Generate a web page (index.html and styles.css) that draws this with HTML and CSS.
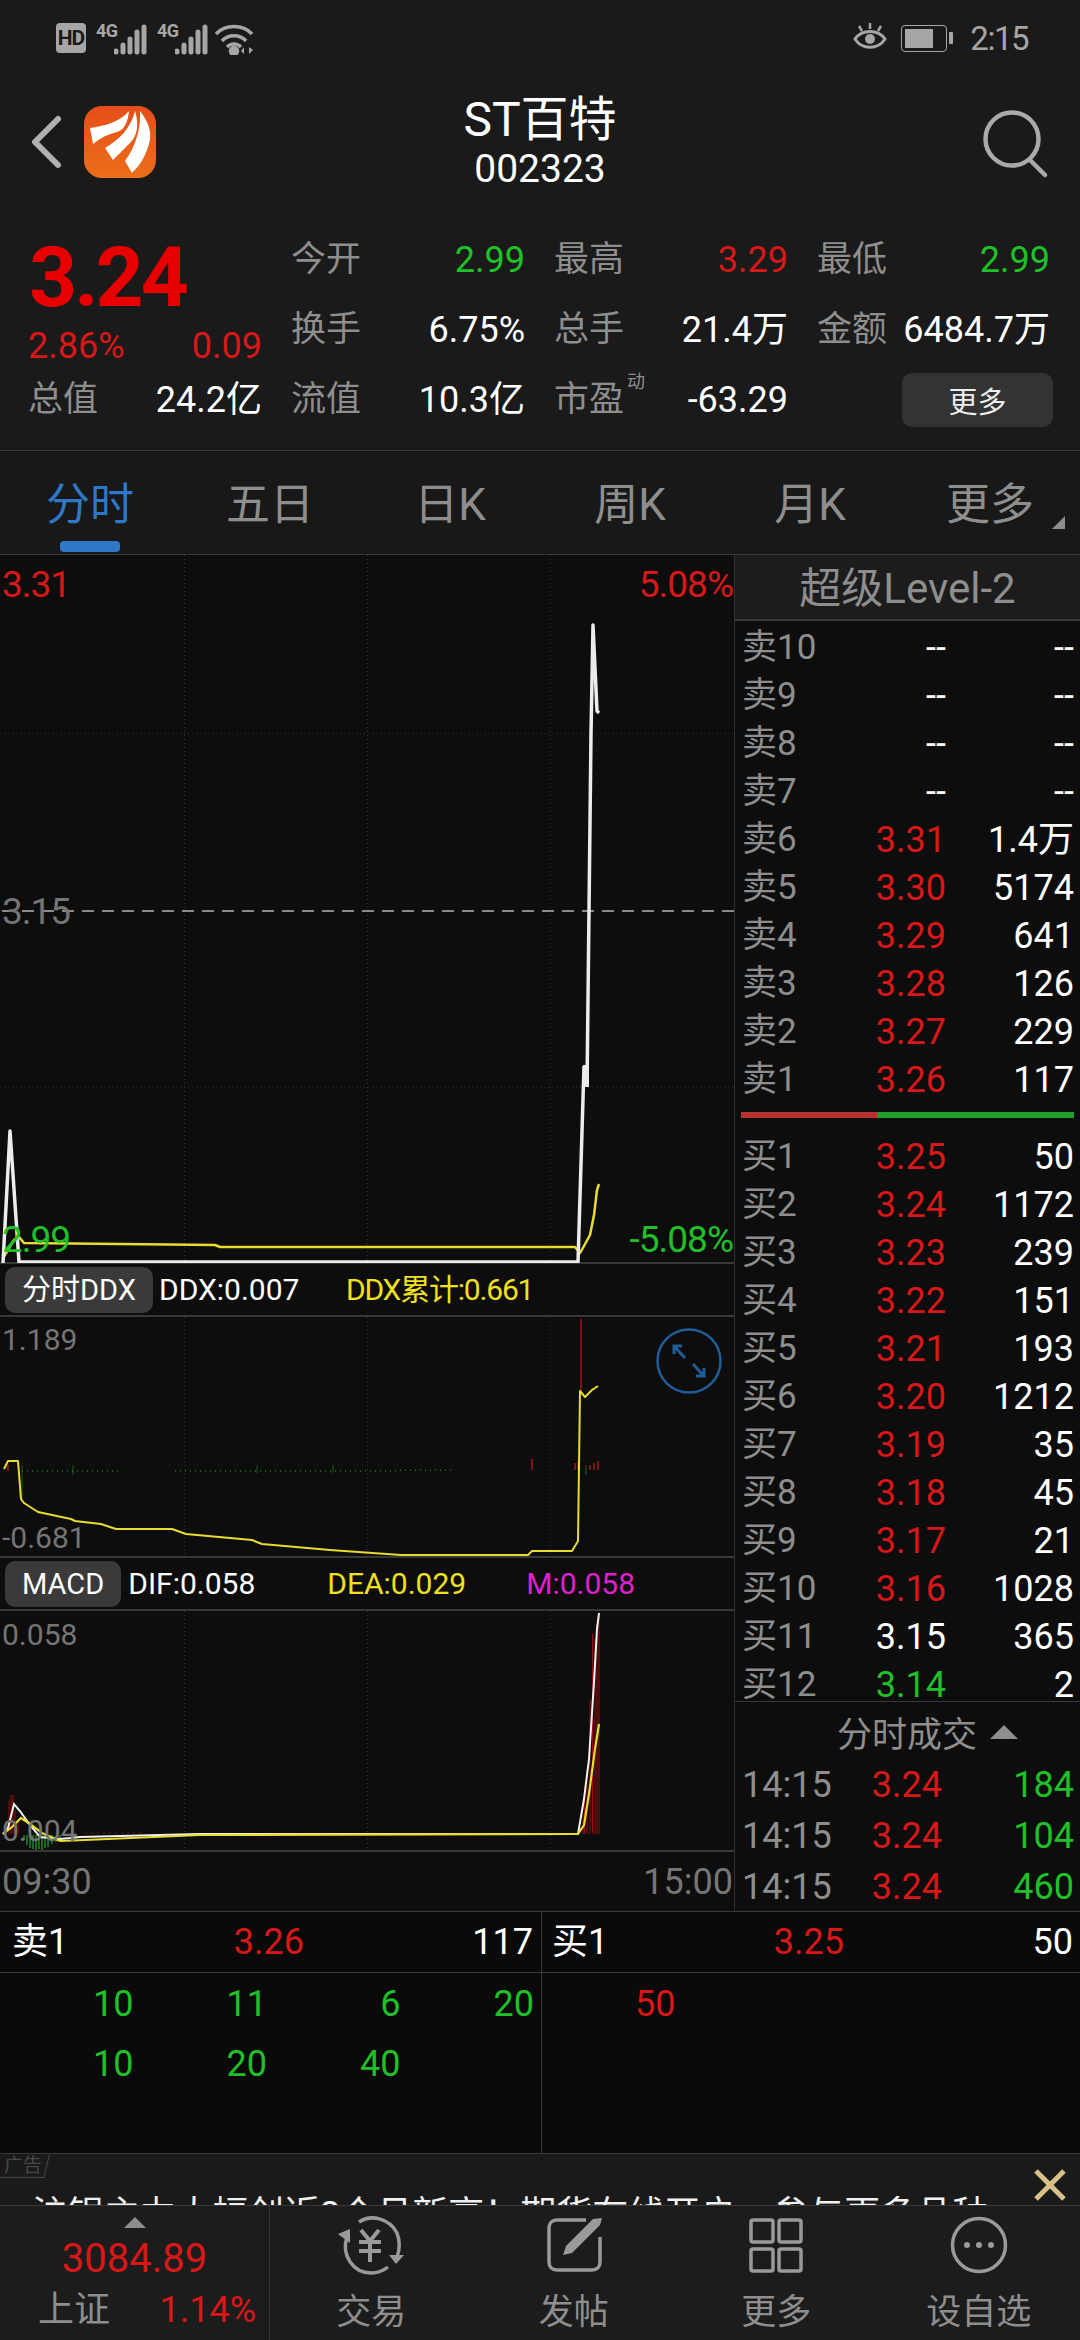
FILE: index.html
```html
<!DOCTYPE html>
<html lang="zh-CN">
<head>
    <meta charset="UTF-8">
    <meta name="viewport" content="width=device-width, initial-scale=1.0">
    <title>ST百特 002323</title>
    <link rel="stylesheet" href="styles.css">
</head>
<body>
    <div class="phone">
        <!-- system status bar -->
        <div class="status">
            <div class="status-left">
                <span class="hd">HD</span>
                <span class="net">4G</span>
                <svg class="signal" width="36" height="32" viewBox="0 0 36 32"><path d="M2 28v1M9 22v7M16 16v13M23 9v20M30 4v25"/></svg>
                <span class="net net-second">4G</span>
                <svg class="signal" width="36" height="32" viewBox="0 0 36 32"><path d="M2 28v1M9 22v7M16 16v13M23 9v20M30 4v25"/></svg>
                <svg class="wifi" width="40" height="32" viewBox="0 0 40 32">
                    <path d="M1 11C10 1 28 1 37 11M7 18C13 11 25 11 31 18M12 24C16 20 22 20 26 24" fill="none"/>
                    <circle cx="19" cy="28" r="3.5"/>
                    <path class="wifi-arrows" d="M29 24v7l-3-3zM34 24v7l4-4z"/>
                </svg>
            </div>
            <div class="status-right">
                <svg width="34" height="32" viewBox="0 0 34 32" fill="none" stroke="#a6a6a6" stroke-width="3">
                    <path d="M2 17C9 7 25 7 32 17C25 28 9 28 2 17Z"/>
                    <circle cx="17" cy="17" r="5" fill="#a6a6a6" stroke="none"/>
                    <path d="M17 1v6M6 4l3 5M28 4l-3 5" stroke-width="2.5"/>
                </svg>
                <div class="battery"><span class="battery-fill"></span></div>
                <span class="clock">2:15</span>
            </div>
        </div>

        <!-- stock title bar -->
        <header class="titlebar">
            <div class="title-left">
                <svg width="32" height="54" viewBox="0 0 32 54" fill="none" stroke="#b0b0b0" stroke-width="6" stroke-linecap="round" stroke-linejoin="round"><path d="M28 4L5 27L28 50"/></svg>
                <div class="logo">
                    <svg width="72" height="72" viewBox="0 0 72 72" fill="#fff">
                        <path d="M6 22C20 20 36 16 45 5C44 16 40 24 33 26C24 28 16 32 9 38Z"/>
                        <path d="M21 42C35 34 47 22 51 5C55 18 54 30 45 38C38 45 33 50 29 54Z"/>
                        <path d="M41 55C52 40 57 22 56 5C66 18 68 28 65 38C61 52 55 60 48 67Z"/>
                    </svg>
                </div>
            </div>
            <div class="title-main">
                <div class="stock-name">ST百特</div>
                <div class="stock-code">002323</div>
            </div>
            <div class="title-right">
                <svg width="68" height="72" viewBox="0 0 68 72" fill="none" stroke="#aaa" stroke-width="4.5" stroke-linecap="round"><circle cx="30" cy="32" r="26.5"/><path d="M48 53L63 68"/></svg>
            </div>
        </header>

        <!-- quote summary -->
        <section class="quote">
            <div class="quote-main">
                <div class="price">3.24</div>
                <div class="change"><span>2.86%</span><span>0.09</span></div>
                <div class="stat"><span class="key">总值</span><span>24.2亿</span></div>
            </div>
            <div class="quote-grid">
                <div class="stat"><span class="key">今开</span><span class="down">2.99</span></div>
                <div class="stat"><span class="key">最高</span><span class="up">3.29</span></div>
                <div class="stat"><span class="key">最低</span><span class="down">2.99</span></div>
                <div class="stat"><span class="key">换手</span><span>6.75%</span></div>
                <div class="stat"><span class="key">总手</span><span>21.4万</span></div>
                <div class="stat"><span class="key">金额</span><span>6484.7万</span></div>
                <div class="stat"><span class="key">流值</span><span>10.3亿</span></div>
                <div class="stat"><span class="key key-pe">市盈<sup class="pe-mark">动</sup></span><span>-63.29</span></div>
                <div class="more-cell"><button class="more-btn">更多</button></div>
            </div>
        </section>

        <!-- period tabs -->
        <nav class="tabs">
            <a class="tab active">分时</a>
            <a class="tab">五日</a>
            <a class="tab">日K</a>
            <a class="tab">周K</a>
            <a class="tab">月K</a>
            <a class="tab">更多</a>
            <span class="tab-corner"></span>
        </nav>

        <div class="market">
            <div class="charts">
                <!-- intraday price -->
                <div class="pane pane-main">
                    <svg viewBox="0 555 734 708" width="734" height="708">
                        <path class="grid-line" d="M184.500 555V1263M367.500 555V1263M550.500 555V1263M0 734H734M0 1087H734"/>
                        <path class="mid-line" d="M2 911H734"/>
                        <path class="avg" d="M3 1258L14 1240L19 1237L24 1243L215 1245L220 1247L575 1247L580 1253L584 1246L590 1235L594 1215L597 1190L599 1184"/>
                        <path class="price-line" d="M3 1263L10 1131L19 1262H578L584 1066"/>
                        <path class="price-line thick" d="M586 1065V1087"/>
                        <path class="price-line" d="M587 1087L589 911L591 734L593 625L597 711L599 713"/>
                    </svg>
                    <span class="axis up at-tl">3.31</span>
                    <span class="axis up at-tr">5.08%</span>
                    <span class="axis grey at-mid">3.15</span>
                    <span class="axis down at-bl">2.99</span>
                    <span class="axis down at-br">-5.08%</span>
                </div>

                <div class="legend">
                    <span class="pill">分时DDX</span>
                    <span class="legend-a">DDX:0.007</span>
                    <span class="legend-b yellow">DDX累计:0.661</span>
                </div>

                <!-- DDX -->
                <div class="pane pane-ddx">
                    <svg viewBox="0 1318 734 240" width="734" height="240">
                        <path class="grid-line" d="M184.500 1318V1558M367.500 1318V1558M550.500 1318V1558"/>
                        <path class="tick-green" d="M22 1472H120M175 1472H400M400 1471H455"/>
                        <path class="tick-green solid" d="M22 1466V1503M73 1466V1476M257 1466V1474M333 1466V1474M586 1466V1476"/>
                        <path class="tick-red" d="M8 1466V1472M532 1460V1471M575 1464V1471M578 1462V1471M590 1466V1471M594 1464V1471M598 1462V1471"/>
                        <path class="tick-red strong" d="M581 1320V1395"/>
                        <path class="avg thin" d="M4 1470L8 1462H18L21 1500L24 1504L38 1513L71 1520L75 1522L101 1525L116 1530H172L186 1535L252 1541L262 1545L330 1551L401 1556H528L532 1552H572L578 1542L580 1392L585 1398L592 1391L598 1387"/>
                    </svg>
                    <span class="axis small grey at-tl">1.189</span>
                    <span class="axis small grey at-bl">-0.681</span>
                    <svg class="expand" width="68" height="68" viewBox="0 0 68 68" fill="none" stroke="#1f5c98" stroke-width="2.500">
                        <circle cx="34" cy="34" r="31.500"/>
                        <path d="M19 19L30 31M19 27V19H27M49 49L38 37M49 41V49H41" stroke-width="3"/>
                    </svg>
                </div>

                <div class="legend">
                    <span class="pill">MACD</span>
                    <span class="legend-c">DIF:0.058</span>
                    <span class="legend-d yellow">DEA:0.029</span>
                    <span class="legend-e magenta">M:0.058</span>
                </div>

                <!-- MACD -->
                <div class="pane pane-macd">
                    <svg viewBox="0 1612 734 240" width="734" height="240">
                        <path class="grid-line" d="M184.500 1612V1852M367.500 1612V1852M550.500 1612V1852"/>
                        <path class="bar-red" d="M9 1835V1802M11 1835V1796M13 1835V1796M15 1835V1810M18 1835V1822M583 1835V1815M584.500 1835V1787M587 1835V1770M590 1835V1700M592.500 1835V1635M595 1835V1640M597 1835V1625M599 1835V1614"/>
                        <path class="bar-green" d="M24 1836V1841M27 1836V1846M30 1836V1849M33 1836V1850M36 1836V1851M39 1836V1850M42 1836V1851M45 1836V1849M48 1836V1848M52 1836V1845M56 1836V1843M60 1836V1840"/>
                        <path class="tick-red faint" d="M85 1834H145"/>
                        <path class="macd-dif" d="M3 1835L8 1829L14 1805L20 1812L30 1826L40 1838L60 1840L80 1838L200 1835H578L584 1800L589 1760L594 1683L597 1630L599 1614"/>
                        <path class="macd-dea" d="M3 1835L12 1828L21 1819L30 1825L42 1834L60 1842L85 1841L200 1836L578 1835L584 1826L589 1795L595 1750L599 1725"/>
                    </svg>
                    <span class="axis small grey at-tl">0.058</span>
                    <span class="axis small grey at-low">0.004</span>
                </div>

                <div class="time-axis"><span>09:30</span><span>15:00</span></div>
            </div>

            <!-- order book -->
            <aside class="book">
                <div class="book-head">超级Level-2</div>
                <div class="book-list book-sell">
                    <div class="row"><span class="lbl">卖10</span><span class="white">--</span><span class="white">--</span></div>
                    <div class="row"><span class="lbl">卖9</span><span class="white">--</span><span class="white">--</span></div>
                    <div class="row"><span class="lbl">卖8</span><span class="white">--</span><span class="white">--</span></div>
                    <div class="row"><span class="lbl">卖7</span><span class="white">--</span><span class="white">--</span></div>
                    <div class="row"><span class="lbl">卖6</span><span class="up">3.31</span><span class="white">1.4万</span></div>
                    <div class="row"><span class="lbl">卖5</span><span class="up">3.30</span><span class="white">5174</span></div>
                    <div class="row"><span class="lbl">卖4</span><span class="up">3.29</span><span class="white">641</span></div>
                    <div class="row"><span class="lbl">卖3</span><span class="up">3.28</span><span class="white">126</span></div>
                    <div class="row"><span class="lbl">卖2</span><span class="up">3.27</span><span class="white">229</span></div>
                    <div class="row"><span class="lbl">卖1</span><span class="up">3.26</span><span class="white">117</span></div>
                </div>
                <div class="ratio"><span class="ratio-sell"></span><span class="ratio-buy"></span></div>
                <div class="book-list book-buy">
                    <div class="row"><span class="lbl">买1</span><span class="up">3.25</span><span class="white">50</span></div>
                    <div class="row"><span class="lbl">买2</span><span class="up">3.24</span><span class="white">1172</span></div>
                    <div class="row"><span class="lbl">买3</span><span class="up">3.23</span><span class="white">239</span></div>
                    <div class="row"><span class="lbl">买4</span><span class="up">3.22</span><span class="white">151</span></div>
                    <div class="row"><span class="lbl">买5</span><span class="up">3.21</span><span class="white">193</span></div>
                    <div class="row"><span class="lbl">买6</span><span class="up">3.20</span><span class="white">1212</span></div>
                    <div class="row"><span class="lbl">买7</span><span class="up">3.19</span><span class="white">35</span></div>
                    <div class="row"><span class="lbl">买8</span><span class="up">3.18</span><span class="white">45</span></div>
                    <div class="row"><span class="lbl">买9</span><span class="up">3.17</span><span class="white">21</span></div>
                    <div class="row"><span class="lbl">买10</span><span class="up">3.16</span><span class="white">1028</span></div>
                    <div class="row"><span class="lbl">买11</span><span class="white">3.15</span><span class="white">365</span></div>
                    <div class="row"><span class="lbl">买12</span><span class="down">3.14</span><span class="white">2</span></div>
                </div>
                <div class="trades-head">分时成交<span class="caret"></span></div>
                <div class="trade"><span class="lbl">14:15</span><span class="up">3.24</span><span class="down">184</span></div>
                <div class="trade"><span class="lbl">14:15</span><span class="up">3.24</span><span class="down">104</span></div>
                <div class="trade"><span class="lbl">14:15</span><span class="up">3.24</span><span class="down">460</span></div>
            </aside>
        </div>

        <!-- best bid / ask queue -->
        <section class="queue">
            <div class="queue-side queue-sell">
                <div class="queue-head"><span class="white">卖1</span><span class="up">3.26</span><span class="white">117</span></div>
                <div class="queue-cells down">
                    <span>10</span><span>11</span><span>6</span><span>20</span>
                    <span>10</span><span>20</span><span>40</span>
                </div>
            </div>
            <div class="queue-side queue-buy">
                <div class="queue-head"><span class="white">买1</span><span class="up">3.25</span><span class="white">50</span></div>
                <div class="queue-cells up"><span>50</span></div>
            </div>
        </section>

        <!-- ad strip -->
        <div class="ad">
            <span class="ad-tag">广告</span>
            <div class="ad-line"><span>沪银主力大幅创近2个月新高！期货在线开户，参与更多品种</span><span class="ad-go">&gt;</span></div>
            <svg class="ad-close" width="32" height="32" viewBox="0 0 32 32"><path d="M2 2L30 30M30 2L2 30" stroke="#d8c088" stroke-width="5" fill="none"/></svg>
        </div>

        <!-- bottom dock -->
        <footer class="dock">
            <div class="index">
                <span class="index-caret"></span>
                <div class="index-value">3084.89</div>
                <div class="index-row"><span class="key">上证</span><span class="up">1.14%</span></div>
            </div>
            <a class="dock-item">
                <svg width="68" height="64" viewBox="0 0 68 64" fill="none" stroke="#9a9a9a" stroke-width="3.500">
                    <path d="M10 24C4 42 16 60 34 60C40 60 46 58 51 54M22 9C34 1 52 5 60 20C63 28 63 36 60 44"/>
                    <path d="M1 21L13 16L13 30Z" fill="#9a9a9a" stroke="none"/>
                    <path d="M67 42L59 51L52 42Z" fill="#9a9a9a" stroke="none"/>
                    <path d="M24 17L33 28L42 17M22 29H44M22 38H44M33 28V49" stroke-width="4"/>
                </svg>
                <span>交易</span>
            </a>
            <a class="dock-item">
                <svg width="64" height="64" viewBox="0 0 64 64" fill="none" stroke="#9a9a9a" stroke-width="3.500">
                    <path d="M44 7H15C10 7 7 10 7 15V49C7 54 10 57 15 57H50C55 57 58 54 58 49V24"/>
                    <path d="M21 42L24 33L51 6L60 5L58 12L30 40Z" fill="#9a9a9a" stroke="none"/>
                </svg>
                <span>发帖</span>
            </a>
            <a class="dock-item">
                <svg width="64" height="64" viewBox="0 0 64 64" fill="none" stroke="#9a9a9a" stroke-width="3.500">
                    <rect x="7" y="7" width="22" height="22" rx="2"/><rect x="35" y="7" width="22" height="22" rx="2"/>
                    <rect x="7" y="36" width="22" height="22" rx="2"/><rect x="35" y="36" width="22" height="22" rx="2"/>
                </svg>
                <span>更多</span>
            </a>
            <a class="dock-item">
                <svg width="64" height="64" viewBox="0 0 64 64" fill="none" stroke="#9a9a9a" stroke-width="3.500">
                    <circle cx="32" cy="32" r="26.500"/>
                    <g fill="#9a9a9a" stroke="none"><circle cx="20" cy="32" r="3"/><circle cx="32" cy="32" r="3"/><circle cx="44" cy="32" r="3"/></g>
                </svg>
                <span>设自选</span>
            </a>
        </footer>
    </div>
</body>
</html>
```

FILE: styles.css
```css
* {
    box-sizing: border-box;
}

body {
    margin: 0;
    background: #1a1a1a;
    font-family: Roboto, "Noto Sans CJK SC", sans-serif;
    color: #fff;
}

.phone {
    width: 1080px;
    height: 2340px;
    overflow: hidden;
    background: #1a1a1a;
}

.up { color: #d81818; }
.down { color: #1fc028; }
.white { color: #fff; }
.yellow { color: #f0e020; }
.magenta { color: #e020d0; }
.grey { color: #757575; }
.key { color: #8e8e8e; }

/* status bar */
.status {
    display: flex;
    justify-content: space-between;
    align-items: center;
    height: 76px;
    padding: 0 52px 0 56px;
    color: #a6a6a6;
}

.status-left,
.status-right {
    display: flex;
    align-items: center;
}

.hd {
    width: 30px;
    height: 30px;
    border-radius: 4px;
    background: #a6a6a6;
    color: #1a1a1a;
    font-size: 21px;
    font-weight: 700;
    line-height: 30px;
    text-align: center;
    letter-spacing: -1px;
}

.net {
    align-self: flex-start;
    width: 18px;
    margin-left: 10px;
    font-size: 18px;
    font-weight: 700;
    line-height: 20px;
    letter-spacing: -0.5px;
}

.net-second {
    margin-left: 7px;
}

.signal {
    margin-top: 2px;
    fill: none;
    stroke: #a6a6a6;
    stroke-width: 5;
    stroke-linecap: round;
}

.wifi {
    margin: 2px 0 0 4px;
    stroke: #a6a6a6;
    stroke-width: 3.5;
    fill: #a6a6a6;
}

.wifi-arrows {
    stroke: none;
}

.battery {
    position: relative;
    width: 46px;
    height: 27px;
    margin: 0 23px 0 14px;
    padding: 3px;
    border: 1.5px solid #a6a6a6;
    border-radius: 4px;
}

.battery::after {
    content: "";
    position: absolute;
    right: -7px;
    top: 6px;
    width: 4px;
    height: 12px;
    background: #a6a6a6;
    border-radius: 1px;
}

.battery-fill {
    display: block;
    width: 28px;
    height: 100%;
    background: #a6a6a6;
}

.clock {
    font-size: 33px;
    letter-spacing: -1.5px;
}

/* title bar */
.titlebar {
    display: grid;
    grid-template-columns: 1fr auto 1fr;
    height: 144px;
}

.title-left {
    display: flex;
    align-items: center;
    gap: 22px;
    padding: 0 0 0 30px;
    height: 132px;
}

.logo {
    width: 72px;
    height: 72px;
    border-radius: 18px;
    background: linear-gradient(180deg, #e64e1a, #ec6e1a);
}

.logo svg {
    display: block;
}

.title-main {
    text-align: center;
    padding-top: 19px;
}

.stock-name {
    font-size: 48px;
    line-height: 50px;
}

.stock-code {
    font-size: 39px;
    line-height: 48px;
}

.title-right {
    display: flex;
    justify-content: flex-end;
    align-items: center;
    height: 134px;
    padding-right: 30px;
}

/* quote */
.quote {
    display: flex;
    height: 231px;
    padding-left: 28px;
    border-bottom: 1px solid #3a3a3a;
}

.quote-main {
    width: 234px;
    margin-right: 29px;
    font-size: 36px;
}

.price {
    height: 108px;
    padding: 8px 0 0 1px;
    font-size: 84px;
    font-weight: 700;
    line-height: 100px;
    letter-spacing: -3px;
    color: #e80000;
}

.change {
    display: flex;
    justify-content: space-between;
    height: 36px;
    line-height: 36px;
    color: #d81818;
}

.quote-main .stat {
    height: 72px;
}

.quote-grid {
    display: grid;
    grid-template-columns: 234px 234px 233px;
    grid-auto-rows: 70px;
    column-gap: 29px;
    padding-top: 5px;
    font-size: 36px;
}

.stat {
    display: flex;
    justify-content: space-between;
    align-items: center;
    line-height: 40px;
}

.stat .key {
    font-size: 35px;
}

.key-pe {
    position: relative;
}

.pe-mark {
    position: absolute;
    left: 73px;
    top: -8px;
    font-size: 18px;
    line-height: 20px;
}

.more-cell {
    display: flex;
    justify-content: flex-end;
    align-items: center;
}

.more-btn {
    width: 151px;
    height: 54px;
    margin-right: -3px;
    border: none;
    border-radius: 10px;
    background: #333;
    color: #eee;
    font-family: inherit;
    font-size: 29px;
}

/* tabs */
.tabs {
    position: relative;
    display: grid;
    grid-template-columns: repeat(6, 180px);
    height: 104px;
    border-bottom: 1px solid #3a3a3a;
    background: #181818;
}

.tab {
    position: relative;
    font-size: 44px;
    line-height: 109px;
    text-align: center;
    color: #8e8e8e;
}

.tab.active {
    color: #2f78c8;
}

.tab.active::after {
    content: "";
    position: absolute;
    left: 60px;
    bottom: 8px;
    width: 60px;
    height: 11px;
    border-radius: 4px;
    background: #2f78c8;
}

.tab-corner {
    position: absolute;
    right: 15px;
    top: 65px;
    border-style: solid;
    border-width: 0 0 13px 13px;
    border-color: transparent transparent #8e8e8e transparent;
}

/* chart column */
.market {
    display: flex;
    height: 1357px;
    border-bottom: 1px solid #3a3a3a;
    background: #0d0d0d;
}

.charts {
    width: 735px;
    border-right: 1px solid #303030;
}

.pane {
    position: relative;
    border-bottom: 2px solid #383838;
}

.pane > svg:first-child {
    display: block;
}

.pane-main {
    height: 709px;
}

.pane-ddx,
.pane-macd {
    height: 241px;
}

.grid-line {
    fill: none;
    stroke: #333;
    stroke-width: 1;
    stroke-dasharray: 1 3;
}

.mid-line {
    fill: none;
    stroke: #8a8a8a;
    stroke-width: 2;
    stroke-dasharray: 12 8;
}

.price-line {
    fill: none;
    stroke: #ececec;
    stroke-width: 3.5;
    stroke-linejoin: round;
}

.price-line.thick {
    stroke-width: 6;
}

.avg {
    fill: none;
    stroke: #e8dc30;
    stroke-width: 2.5;
    stroke-linejoin: round;
}

.avg.thin {
    stroke-width: 2;
}

.tick-green {
    fill: none;
    stroke: #1a5a1a;
    stroke-width: 2;
    stroke-dasharray: 1 4;
}

.tick-green.solid {
    stroke-width: 1;
    stroke-dasharray: none;
}

.tick-red {
    fill: none;
    stroke: #a01818;
    stroke-width: 1.5;
}

.tick-red.strong {
    stroke: #b01010;
}

.tick-red.faint {
    stroke: #5a1010;
    stroke-dasharray: 2 4;
}

.bar-red {
    fill: none;
    stroke: #960e0e;
    stroke-width: 1;
}

.bar-green {
    fill: none;
    stroke: #1fa82a;
    stroke-width: 1.2;
}

.macd-dif {
    fill: none;
    stroke: #f2f2f2;
    stroke-width: 2;
}

.macd-dea {
    fill: none;
    stroke: #e8dc30;
    stroke-width: 2.2;
}

/* price and percent labels laid over the charts */
.axis {
    position: absolute;
    font-size: 37px;
    line-height: 40px;
    letter-spacing: -1px;
}

.axis.small {
    font-size: 30px;
    line-height: 36px;
    letter-spacing: 0;
}

.at-tl { left: 2px; top: 10px; }
.at-tr { right: 1px; top: 10px; }
.at-mid { left: 2px; top: 337px; }
.at-bl { left: 2px; top: 665px; }
.at-br { right: 1px; top: 665px; }

.pane-ddx .at-tl { top: 5px; }
.pane-ddx .at-bl { top: 203px; }
.pane-macd .at-tl { top: 6px; }
.pane-macd .at-low { left: 2px; top: 202px; }

.expand {
    position: absolute;
    left: 655px;
    top: 10px;
}

.legend {
    display: flex;
    align-items: center;
    height: 53px;
    padding-left: 5px;
    font-size: 30px;
    line-height: 40px;
    border-bottom: 2px solid #383838;
}

.pill {
    height: 46px;
    padding: 0 17px;
    border-radius: 10px;
    background: #3a3a3a;
    font-size: 29px;
    line-height: 46px;
}

.legend-a { margin-left: 6px; width: 187px; }
.legend-b { white-space: nowrap; letter-spacing: -1.2px; }
.legend-c { margin-left: 7px; width: 199px; }
.legend-d { width: 199px; }
.legend-e { white-space: nowrap; }

.time-axis {
    display: flex;
    justify-content: space-between;
    padding: 0 1px 0 2px;
    font-size: 36px;
    line-height: 60px;
    color: #757575;
}

/* order book */
.book {
    width: 345px;
    font-size: 36px;
    color: #8e8e8e;
}

.book-head {
    height: 66px;
    border-bottom: 2px solid #383838;
    background: #1c1c1c;
    font-size: 42px;
    line-height: 68px;
    text-align: center;
}

.book-sell {
    padding-top: 3px;
}

.row,
.trade {
    display: grid;
    grid-template-columns: 90px 114px 128px;
    height: 48px;
    padding-left: 7px;
    line-height: 48px;
    text-align: right;
}

.trade {
    grid-template-columns: 90px 110px 132px;
    height: 51px;
    line-height: 53px;
}

.lbl {
    text-align: left;
    white-space: nowrap;
}

.row .lbl {
    font-size: 35px;
}

.ratio {
    display: flex;
    height: 6px;
    margin: 8px 6px 15px;
}

.ratio-sell {
    width: 136px;
    background: #b83232;
}

.ratio-buy {
    flex: 1;
    background: #1f9e2c;
}

/* the twelfth row runs right down to the rule under the list */
.book-buy {
    height: 569px;
    border-bottom: 1px solid #383838;
}

.trades-head {
    display: flex;
    justify-content: center;
    align-items: center;
    height: 57px;
    padding: 2px 0 0 40px;
    font-size: 35px;
}

.caret {
    margin-left: 13px;
    border-style: solid;
    border-width: 0 14px 14px;
    border-color: transparent transparent #8e8e8e;
}

/* bid / ask queue */
.queue {
    display: flex;
    height: 241px;
    background: #0a0a0a;
    font-size: 36px;
}

.queue-sell {
    width: 541px;
}

.queue-buy {
    width: 539px;
    border-left: 1px solid #3a3a3a;
}

.queue-head {
    display: grid;
    grid-template-columns: 160px 132px 1fr;
    height: 61px;
    padding: 0 8px 0 12px;
    line-height: 60px;
    border-bottom: 1px solid #3a3a3a;
    text-align: right;
}

.queue-head span:first-child {
    text-align: left;
}

.queue-buy .queue-head {
    padding: 0 7px 0 10px;
}

.queue-cells {
    display: grid;
    grid-template-columns: repeat(4, 133.5px);
    grid-auto-rows: 60px;
    padding-top: 1px;
    line-height: 60px;
    text-align: right;
}

/* ad strip */
.ad {
    position: relative;
    height: 52px;
    overflow: hidden;
    border-top: 1px solid #3a3a3a;
    background: #1a1a1a;
}

.ad-tag {
    position: absolute;
    left: 4px;
    top: 1px;
    font-size: 19px;
    line-height: 22px;
    color: #484848;
}

.ad-tag::after {
    content: "";
    position: absolute;
    left: -8px;
    top: 0;
    width: 50px;
    height: 22px;
    border-right: 1px solid #484848;
    border-bottom: 1px solid #484848;
    transform: skewX(-14deg);
}

.ad-line {
    display: flex;
    justify-content: space-between;
    width: 1022px;
    padding: 41px 0 0 32px;
    font-size: 36px;
    line-height: 40px;
    white-space: nowrap;
    color: #f0f0f0;
}

.ad-close {
    position: absolute;
    right: 14px;
    top: 15px;
}

/* dock */
.dock {
    display: grid;
    grid-template-columns: 270px repeat(4, 202.500px);
    height: 135px;
    border-top: 1px solid #3a3a3a;
    background: #1c1c1c;
}

.index {
    display: flex;
    flex-direction: column;
    align-items: center;
    border-right: 1px solid #333;
}

.index-caret {
    margin-top: 11px;
    border-style: solid;
    border-width: 0 11px 11px;
    border-color: transparent transparent #8e8e8e;
}

.index-value {
    margin-top: 9px;
    font-size: 40px;
    line-height: 44px;
    color: #d81818;
}

.index-row {
    display: flex;
    justify-content: space-between;
    width: 100%;
    margin-top: 4px;
    padding: 0 13px 0 38px;
    font-size: 36px;
    line-height: 50px;
}

.dock-item {
    display: flex;
    flex-direction: column;
    align-items: center;
    padding-top: 7px;
    font-size: 35px;
    line-height: 40px;
    color: #8e8e8e;
}

.dock-item svg {
    margin-bottom: 16px;
}
```
